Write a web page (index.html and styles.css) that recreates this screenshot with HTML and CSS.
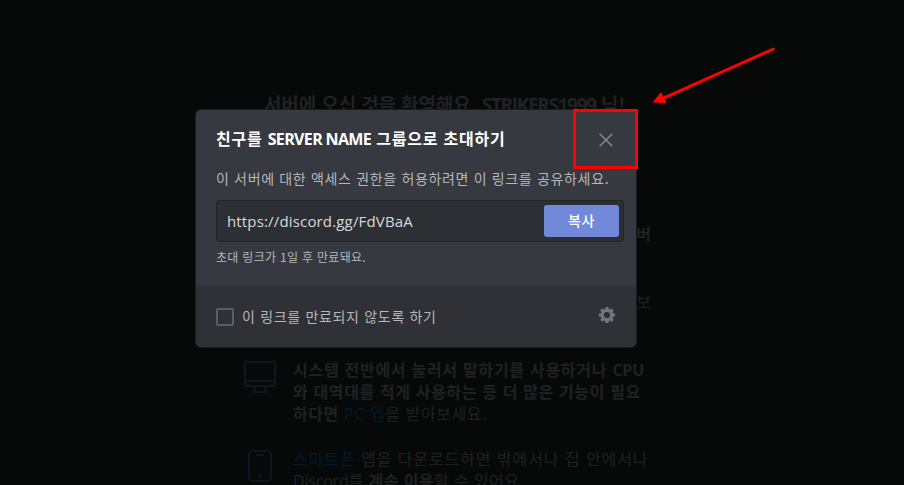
FILE: index.html
```html
<!DOCTYPE html>
<html lang="ko">
<head>
<meta charset="utf-8">
<title>초대하기</title>
<link rel="stylesheet" href="styles.css">
</head>
<body>
<main class="welcome">
  <h1 class="welcome-title">서버에 오신 것을 환영해요, <span class="latin user">STRIKERS1999</span> 님!</h1>
  <div class="tips">
    <div class="tip partial"><p class="tip-text end"><b>버</b></p></div>
    <div class="tip partial"><p class="tip-text end">보</p></div>
    <div class="tip">
      <svg class="tip-icon" viewBox="0 0 32 34" fill="none" stroke="currentColor" stroke-width="2"><rect x="1" y="3" width="30" height="24" rx="1"/><path d="M1 22h30M11 27v5M21 27v5M8 33h16"/></svg>
      <p class="tip-text"><b class="line l1">시스템 전반에서 눌러서 말하기를 사용하거나 <span class="latin cpu">CPU</span></b><b class="line l2">와 대역대를 적게 사용하는 등 더 많은 기능이 필요</b><span class="line l3"><b>하다면</b> <a><span class="latin">PC</span> 앱</a>을 받아보세요.</span></p>
    </div>
    <div class="tip">
      <svg class="tip-icon" viewBox="0 0 32 34" fill="none" stroke="currentColor" stroke-width="2"><rect x="5" y="3" width="22" height="30" rx="4"/><path d="M12 7h8"/><circle cx="16" cy="28" r="2" fill="currentColor" stroke="none"/></svg>
      <p class="tip-text"><span class="line l4"><a>스마트폰</a> 앱을 다운로드하면 밖에서나 집 안에서나</span><span class="line l5"><span class="latin discord">Discord</span>를 <b>계속 이용</b>할 수 있어요.</span></p>
    </div>
  </div>
</main>

<section class="modal">
  <div class="modal-body">
    <h2 class="modal-title">친구를 <span class="latin server">SERVER NAME</span> 그룹으로 초대하기</h2>
    <p class="modal-text">이 서버에 대한 액세스 권한을 허용하려면 이 링크를 공유하세요.</p>
    <div class="invite">
      <span class="invite-link latin">https://discord.gg/FdVBaA</span>
      <button class="copy">복사</button>
    </div>
    <p class="note">초대 링크가 1일 후 만료돼요.</p>
  </div>
  <div class="modal-footer">
    <span class="checkbox"></span>
    <span class="check-label">이 링크를 만료되지 않도록 하기</span>
    <svg class="gear" viewBox="0 0 16 16"><path fill="currentColor" fill-rule="evenodd" d="M6.6 0h2.8l.5 2.2 1 .4 1.900-1.200 1.900 1.900-1.200 1.900.4 1 2.100.4v2.800l-2.100.5-.4 1 1.200 1.900-1.900 1.900-1.900-1.200-1 .4L9.400 16H6.600l-.5-2.100-1-.4-1.900 1.200-1.900-1.900 1.200-1.900-.4-1L0 9.400V6.600l2.100-.4.4-1-1.200-1.900 1.900-1.900 1.900 1.200 1-.4zM8 4.900a3.100 3.100 0 1 0 0 6.200 3.100 3.100 0 0 0 0-6.200z"/></svg>
  </div>
</section>

<div class="close-highlight"><svg class="close" viewBox="0 0 14 14"><path d="M.7.7l12.600 12.600M13.300.7L.7 13.300" stroke="currentColor" stroke-width="1.600"/></svg></div>
<svg class="arrow" viewBox="0 0 130 64"><path d="M123.500 2.500L12 52.300" stroke="#f00" stroke-width="3"/><path d="M1.500 56.500L10 46 15.500 57z" fill="#f00"/></svg>
</body>
</html>
```
FILE: styles.css
```css
* { box-sizing: border-box; }
body {
  margin: 0;
  height: 485px;
  overflow: hidden;
  position: relative;
  background: #070908;
  font-family: "Noto Sans CJK KR", sans-serif;
  color: #b5b7ba;
}
h1, h2, p { margin: 0; white-space: nowrap; }
.latin { font-family: "Open Sans", "Noto Sans CJK KR", sans-serif; }

.welcome { padding-top: 89px; color: #202122; }
.welcome-title {
  margin-left: 264px;
  height: 30px;
  font-size: 19px;
  line-height: 30px;
  font-weight: 700;
  letter-spacing: -0.12px;
}
.user { letter-spacing: -1.35px; }
.tips {
  width: 416px;
  margin: 104px 0 0 244px;
  display: flex;
  flex-direction: column;
  gap: 24px;
}
.tip { display: flex; gap: 17px; }
.partial { height: 44px; justify-content: flex-end; padding-right: 9px; }
.tip-icon { flex: none; width: 32px; height: 34px; color: #101522; }
.tip-text { font-size: 16px; line-height: 22px; margin-top: -1px; }
.tip-text b { font-weight: 700; }
.tip-text a { color: #021b29; }
.line { display: block; height: 22px; }
.l1 { letter-spacing: 0.72px; }
.l2 { letter-spacing: 0.63px; }
.cpu { letter-spacing: -0.2px; }
.l3 { letter-spacing: 0.58px; }
.l4 { letter-spacing: 0.92px; }
.l5 { letter-spacing: 0.4px; }
.discord { letter-spacing: -0.2px; }

.modal {
  position: absolute;
  left: 196px;
  top: 110px;
  width: 440px;
  height: 237px;
  border-radius: 5px;
  overflow: hidden;
  background: #36393f;
  box-shadow: 0 0 0 1px #1b1c1e;
}
.modal-body { height: 176px; padding: 17px 12px 0 20px; }
.modal-title {
  font-size: 16px;
  line-height: 22px;
  font-weight: 700;
  letter-spacing: 0.76px;
  color: #fff;
}
.server { letter-spacing: -0.65px; }
.modal-text { margin-top: 18px; font-size: 14px; line-height: 20px; letter-spacing: 0.66px; }
.invite {
  margin-top: 12px;
  height: 42px;
  padding: 0 4px 0 10px;
  display: flex;
  align-items: center;
  justify-content: space-between;
  border: 1px solid #232528;
  border-radius: 3px;
  background: #2c2f33;
}
.invite-link { font-size: 15px; letter-spacing: 0.16px; color: #d8d9da; }
.copy {
  width: 75px;
  height: 32px;
  padding: 0 0 2px;
  border: 0;
  border-radius: 3px;
  background: #7289da;
  color: #fff;
  font: 500 14px/30px "Noto Sans CJK KR", sans-serif;
  letter-spacing: 0.6px;
}
.note { margin-top: 6px; font-size: 12px; line-height: 18px; letter-spacing: 0.3px; }
.modal-footer {
  height: 61px;
  padding: 0 21px 0 20px;
  display: flex;
  align-items: center;
  background: #303136;
}
.checkbox { width: 18px; height: 18px; border: 2px solid #5c5e62; border-radius: 2px; }
.check-label {
  margin: -2px 0 0 8px;
  font-size: 14px;
  line-height: 20px;
  letter-spacing: 0.68px;
  white-space: nowrap;
}
.gear { width: 16px; height: 16px; margin: -3px 0 0 auto; color: #72767d; }

.close-highlight {
  position: absolute;
  left: 573px;
  top: 109px;
  width: 65px;
  height: 60px;
  border: 3px solid #f00;
  display: flex;
  align-items: center;
  justify-content: center;
  padding-top: 2px;
}
.close { width: 14px; height: 14px; color: #83858a; }
.arrow { position: absolute; left: 651px; top: 46px; width: 130px; height: 64px; }
```
